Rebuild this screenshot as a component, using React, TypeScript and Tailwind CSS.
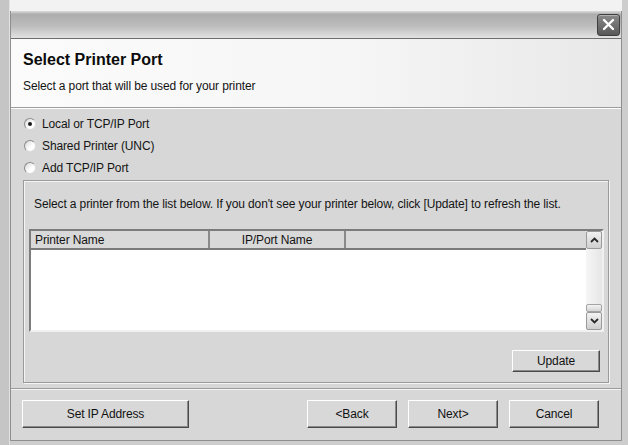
import { useState } from "react";

const RadioOption = ({
  label,
  checked,
  onSelect,
}: {
  label: string;
  checked: boolean;
  onSelect: () => void;
}) => {
  return (
    <label className="flex flex-row items-center h-[22px] pl-[13px] cursor-default" onClick={onSelect}>
      <span className="w-[12px] h-[12px] rounded-full border border-[#8c8c8c] border-b-[#dcdcdc] border-r-[#dcdcdc] bg-[linear-gradient(135deg,#d8d8d8,#ffffff_60%)] flex items-center justify-center">
        {checked && <span className="w-[4px] h-[4px] rounded-full bg-[#1a1a1a]" />}
      </span>
      <span className="ml-[6px]">{label}</span>
    </label>
  );
};

const ClassicButton = ({ text, className }: { text: string; className: string }) => {
  return (
    <button
      className={
        "bg-[#d8d8d8] border border-t-white border-l-white border-b-[#4a4a4a] border-r-[#4a4a4a] shadow-[inset_-1px_-1px_0_#8a8a8a] text-[12px] tracking-[-0.12px] text-[#111] " +
        className
      }
    >
      {text}
    </button>
  );
};

const ArrowButton = ({ up }: { up: boolean }) => {
  return (
    <div className="h-[18px] w-[16px] rounded-[2px] border border-[#9a9a9a] bg-[linear-gradient(to_bottom,#f2f2f2,#cfcfcf)] flex items-center justify-center">
      <svg width="9" height="6" viewBox="0 0 9 6">
        <path
          d={up ? "M1 5 L4.5 1.5 L8 5" : "M1 1 L4.5 4.5 L8 1"}
          fill="none"
          stroke="#2a2a2a"
          strokeWidth="1.8"
        />
      </svg>
    </div>
  );
};

const App = () => {
  const [port, setPort] = useState("local");

  return (
    <div className="w-[628px] h-[445px] bg-[#cdcdcd] flex flex-row overflow-hidden font-['Liberation_Sans',Arial,sans-serif] text-[12px] tracking-[-0.12px] text-[#141414]">
      <div className="w-[10px] bg-[#c5c5c5] border-r border-[#e2e2e2]" />
      <div className="flex flex-col">
        <div className="h-[11px] bg-[#f2f2f2]" />
        <div className="w-[612px] h-[430px] flex flex-col border-l border-r border-b border-[#8e8e8e] bg-[#d7d7d7]">
          <div className="h-[28px] rounded-t-[4px] border-b border-[#6e6e6e] bg-[linear-gradient(to_bottom,#dcdcdc_0%,#adadad_12%,#bcbcbc_55%,#e2e2e2_100%)] flex flex-row items-center justify-end pr-[1px]">
            <div className="w-[23px] h-[22px] rounded-[3px] border border-[#3e3e3e] bg-[linear-gradient(to_bottom,#8a8a8a,#585858)] shadow-[inset_0_1px_0_#b0b0b0] flex items-center justify-center">
              <svg width="13" height="13" viewBox="0 0 13 13">
                <path d="M2 2 L11 11 M11 2 L2 11" stroke="#ffffff" strokeWidth="2.4" strokeLinecap="round" />
              </svg>
            </div>
          </div>
          <div className="h-[69px] border-b border-[#9c9c9c] bg-[linear-gradient(to_right,#fbfbfb_0%,#f6f6f6_55%,#e8e8e8_100%)] pl-[12px] flex flex-col">
            <p className="mt-[11px] text-[16px] font-bold leading-[19px] tracking-normal text-[#0c0c0c]">Select Printer Port</p>
            <p className="mt-[10px] leading-[14px]">Select a port that will be used for your printer</p>
          </div>
          <div className="flex flex-col flex-1 border-t border-white pt-[4px]">
            <RadioOption label="Local or TCP/IP Port" checked={port === "local"} onSelect={() => setPort("local")} />
            <RadioOption label="Shared Printer (UNC)" checked={port === "unc"} onSelect={() => setPort("unc")} />
            <RadioOption label="Add TCP/IP Port" checked={port === "add"} onSelect={() => setPort("add")} />

            <div className="mt-[1px] ml-[12px] w-[586px] h-[203px] border border-[#9a9a9a] shadow-[inset_1px_1px_0_#f4f4f4,1px_1px_0_#f4f4f4] flex flex-col pl-[5px] pr-[4px]">
              <p className="mt-[16px] ml-[5px] leading-[14px]">
                Select a printer from the list below. If you don't see your printer below, click [Update] to refresh the list.
              </p>
              <div className="mt-[18px] h-[103px] border-2 border-[#7c7c7c] border-b-[#f0f0f0] border-r-[#f0f0f0] bg-white flex flex-row">
                <div className="flex-1 flex flex-col">
                  <div className="h-[19px] flex flex-row bg-[#d9d9d9] border-b-2 border-[#7a7a7a] text-[12px]">
                    <div className="w-[179px] border-r-2 border-[#8a8a8a] pl-[4px] leading-[18px]">Printer Name</div>
                    <div className="w-[136px] border-r-2 border-[#8a8a8a] text-center leading-[18px]">IP/Port Name</div>
                    <div className="flex-1" />
                  </div>
                  <div className="flex-1 bg-white" />
                </div>
                <div className="w-[16px] flex flex-col bg-[linear-gradient(to_right,#f6f6f6,#e6e6e6)]">
                  <ArrowButton up={true} />
                  <div className="flex-1" />
                  <div className="h-[8px] w-[16px] rounded-[2px] border border-[#a4a4a4] bg-[linear-gradient(to_bottom,#f4f4f4,#d4d4d4)]" />
                  <ArrowButton up={false} />
                </div>
              </div>
              <div className="flex flex-row justify-end mt-[18px] pr-[4px]">
                <ClassicButton text="Update" className="w-[88px] h-[22px]" />
              </div>
            </div>

            <div className="mt-[5px] h-[2px] border-t border-[#9a9a9a] border-b border-b-[#f4f4f4]" />

            <div className="mt-[10px] flex flex-row pl-[11px] pr-[22px]">
              <ClassicButton text="Set IP Address" className="w-[167px] h-[28px]" />
              <div className="flex-1" />
              <ClassicButton text="<Back" className="w-[90px] h-[28px]" />
              <ClassicButton text="Next>" className="w-[90px] h-[28px] ml-[11px]" />
              <ClassicButton text="Cancel" className="w-[90px] h-[28px] ml-[11px]" />
            </div>
          </div>
        </div>
      </div>
    </div>
  );
};

export default App;
